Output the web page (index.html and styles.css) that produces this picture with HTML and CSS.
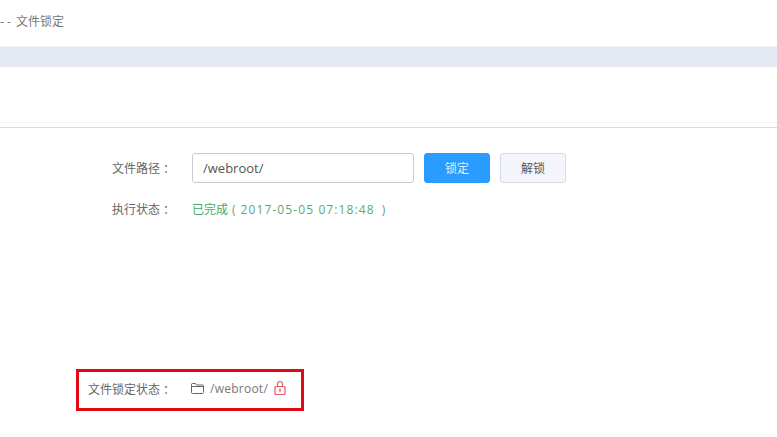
FILE: index.html
```html
<!DOCTYPE html>
<html lang="zh-CN">
<head>
<meta charset="utf-8">
<title>文件锁定</title>
<link rel="stylesheet" href="styles.css">
</head>
<body>
<header class="crumb"><span class="crumb-sep">-</span><span class="crumb-sep">-</span><span>文件锁定</span></header>
<div class="band"></div>
<div class="tabs"></div>
<main class="form">
  <div class="row row-path">
    <span class="label">文件路径<span class="colon">：</span></span>
    <div class="input">/webroot/</div>
    <button class="btn btn-primary">锁定</button>
    <button class="btn btn-plain">解锁</button>
  </div>
  <div class="row row-state">
    <span class="label">执行状态<span class="colon">：</span></span>
    <span class="state">已完成<span class="paren-open">(</span><span class="stamp">2017-05-05 07:18:48</span><span class="paren-close">)</span></span>
  </div>
</main>
<section class="lockbox">
  <span class="lock-label">文件锁定状态<span class="colon">：</span></span>
  <svg class="folder" width="13" height="11" viewBox="0 0 13 11"><path d="M.5 1.500a1 1 0 0 1 1-1h3l1 1.500h6a1 1 0 0 1 1 1v6.500a1 1 0 0 1-1 1h-10a1 1 0 0 1-1-1zM.5 3.500h12" fill="none" stroke="#666"/></svg>
  <span class="lock-path">/webroot/</span>
  <svg class="lock" width="12" height="14" viewBox="0 0 12 14"><path d="M3.500 6V3a2.500 2.500 0 0 1 5 0V6" fill="none" stroke="#e0606f" stroke-width="1.200"/><rect x="1" y="5.500" width="10" height="8" rx=".8" fill="#fdf3f4" stroke="#e0606f" stroke-width="1.200"/><path d="M6 8v2.500" stroke="#e0606f" stroke-width="1.600"/></svg>
</section>
</body>
</html>
```
FILE: styles.css
```css
* { box-sizing: border-box; }
html, body { margin: 0; padding: 0; }
body {
  width: 777px;
  height: 437px;
  overflow: hidden;
  background: #fff;
  font-family: "Open Sans", "Noto Sans CJK SC", sans-serif;
  font-size: 12px;
  color: #666;
}
.crumb {
  display: flex;
  height: 47px;
  padding: 13px 0 0 0;
  line-height: 17px;
  color: #777;
  border-bottom: 1px solid #f6f6f6;
}
.crumb-sep { width: 6px; margin-left: 1px; flex: none; }
.crumb-sep:first-child { margin-left: 0; }
.crumb-sep + span:not(.crumb-sep) { margin-left: 3px; }
.band {
  height: 20px;
  background: #e4e8f3;
  border-bottom: 1px solid #e9ecf5;
}
.tabs {
  height: 61px;
  border-top: 1px solid #fafafa;
  border-bottom: 1px solid #dcdcdc;
  box-shadow: inset 0 -4px 0 #fff, inset 0 -5px 0 #f4f4f4;
}
.form { padding: 25px 0 0 112px; }
.row { display: flex; align-items: center; }
.row-path { height: 30px; }
.row-state { margin-top: 16px; height: 20px; }
.label { display: flex; width: 80px; color: #666; }
.colon { margin-left: 3px; }
.input {
  width: 222px;
  height: 30px;
  padding-left: 10px;
  line-height: 28px;
  border: 1px solid #c6ccd6;
  border-radius: 3px;
  font-size: 13px;
  color: #555;
}
.btn {
  height: 30px;
  padding: 0;
  border-radius: 3px;
  font: inherit;
}
.btn-primary {
  width: 66px;
  margin-left: 10px;
  border: 1px solid #2a9bff;
  background: #2a9bff;
  color: #dff0ff;
}
.btn-plain {
  width: 66px;
  margin-left: 10px;
  border: 1px solid #d5dbe8;
  background: #f3f5fb;
  color: #555;
}
.state { color: #3fa866; }
.paren-open { margin: 0 5px 0 4px; color: #5aa878; }
.paren-close { margin-left: 7px; color: #5aa878; }
.stamp { letter-spacing: 1.100px; color: #5aa878; }
.lockbox {
  position: absolute;
  left: 76px;
  top: 369px;
  width: 228px;
  height: 42px;
  display: flex;
  align-items: center;
  padding: 0 0 3px 9px;
  border: 3px solid #de0a14;
}
.lock-label { display: flex; width: 103px; }
.folder { margin-right: 6px; }
.lock-path { font-size: 12px; letter-spacing: .25px; color: #777; }
.lock { margin-left: 6px; margin-top: -2px; }
```
